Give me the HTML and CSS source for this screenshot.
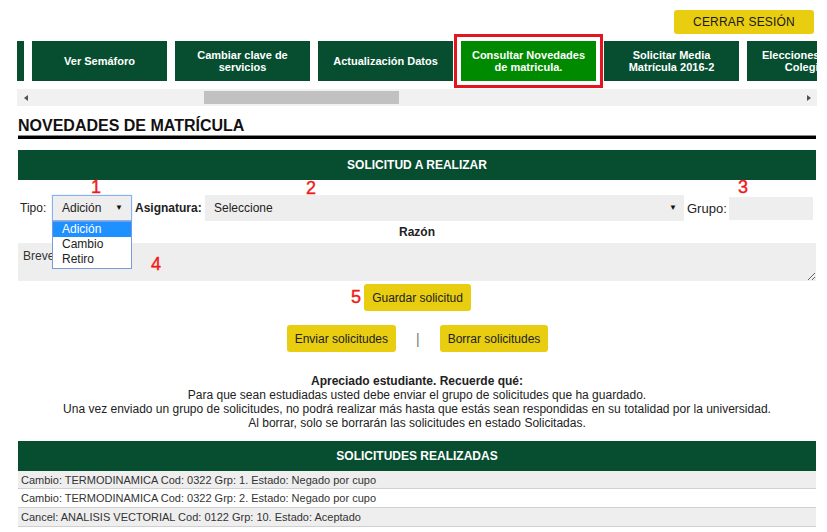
FILE: index.html
```html
<!DOCTYPE html>
<html lang="es">
<head>
  <meta charset="UTF-8">
  <meta name="viewport" content="width=device-width, initial-scale=1.0">
  <title>Novedades de matrícula</title>
  <link rel="stylesheet" href="styles.css">
</head>
<body>
<div class="page">

  <!-- Top bar -->
  <div class="topbar">
    <button class="logout">CERRAR SESIÓN</button>
  </div>

  <!-- Menu tabs (scrolled strip) -->
  <div class="tabs">
    <div class="tabs-row">
      <div class="tab"></div>
      <div class="tab">Ver Semáforo</div>
      <div class="tab">Cambiar clave de<br>servicios</div>
      <div class="tab">Actualización Datos</div>
      <div class="tab active">Consultar Novedades<br>de matricula.</div>
      <div class="tab">Solicitar Media<br>Matrícula 2016-2</div>
      <div class="tab">Elecciones Cuerpos<br>Colegiados</div>
    </div>
  </div>
  <div class="scrollbar">
    <div class="arrow"><span class="tri-left"></span></div>
    <div class="track"><div class="thumb"></div></div>
    <div class="arrow"><span class="tri-right"></span></div>
  </div>

  <h1 class="title">NOVEDADES DE MATRÍCULA</h1>

  <div class="bar">SOLICITUD A REALIZAR</div>

  <!-- Request form -->
  <div class="form-row">
    <span class="label label-tipo">Tipo:</span>
    <div class="select select-tipo">Adición<span class="caret">▼</span></div>
    <span class="label label-asig">Asignatura:</span>
    <div class="select select-asig">Seleccione<span class="caret">▼</span></div>
    <span class="label label-grupo">Grupo:</span>
    <div class="input-grupo"></div>
  </div>

  <div class="reason-label">Razón</div>
  <textarea class="reason" placeholder="Breve explicación"></textarea>

  <div class="actions">
    <button class="btn">Guardar solicitud</button>
  </div>

  <div class="actions actions-send">
    <button class="btn">Enviar solicitudes</button>
    <span class="sep">|</span>
    <button class="btn">Borrar solicitudes</button>
  </div>

  <div class="notice">
    <strong>Apreciado estudiante. Recuerde qué:</strong><br>
    Para que sean estudiadas usted debe enviar el grupo de solicitudes que ha guardado.<br>
    Una vez enviado un grupo de solicitudes, no podrá realizar más hasta que estás sean respondidas en su totalidad por la universidad.<br>
    Al borrar, solo se borrarán las solicitudes en estado Solicitadas.
  </div>

  <div class="bar bar-list">SOLICITUDES REALIZADAS</div>
  <div class="list">
    <div class="row">Cambio: TERMODINAMICA Cod: 0322 Grp: 1. Estado: Negado por cupo</div>
    <div class="row">Cambio: TERMODINAMICA Cod: 0322 Grp: 2. Estado: Negado por cupo</div>
    <div class="row">Cancel: ANALISIS VECTORIAL Cod: 0122 Grp: 10. Estado: Aceptado</div>
  </div>

  <!-- Open dropdown of the Tipo select -->
  <div class="dropdown">
    <div class="option selected">Adición</div>
    <div class="option">Cambio</div>
    <div class="option">Retiro</div>
  </div>

  <!-- Annotation numbers -->
  <span class="mark mark-1">1</span>
  <span class="mark mark-2">2</span>
  <span class="mark mark-3">3</span>
  <span class="mark mark-4">4</span>
  <span class="mark mark-5">5</span>
</div>
</body>
</html>
```

FILE: styles.css
```css
body {
  margin: 0;
  background: #fff;
  color: #222;
  font-family: "Liberation Sans", Arial, sans-serif;
  font-size: 12px;
}
.page {
  position: relative;
  width: 800px;
  margin-left: 17px;
}
/* Top bar */
.topbar {
  display: flex;
  justify-content: flex-end;
  padding: 10px 3px 0 0;
}
.logout {
  width: 140px;
  height: 24px;
  border: none;
  border-radius: 3px;
  background: #e8cd10;
  color: #1a1a1a;
  font-family: inherit;
  font-size: 12px;
  letter-spacing: 0.2px;
  padding: 0;
}
/* Tabs strip */
.tabs {
  overflow: hidden;
  padding: 7px 0;
}
.tabs-row {
  display: flex;
  gap: 8px;
  margin-left: -128px;
}
.tab {
  flex: none;
  width: 135px;
  height: 40px;
  display: flex;
  align-items: center;
  justify-content: center;
  text-align: center;
  background: #074e30;
  color: #fff;
  font-weight: bold;
  font-size: 11px;
  line-height: 12px;
}
.tab.active {
  background: #008a00;
  outline: 3px solid #e3161f;
  outline-offset: 4px;
}
/* Fake scrollbar */
.scrollbar {
  display: flex;
  height: 17px;
  margin-top: 1px;
  background: #f1f1f1;
}
.arrow {
  width: 17px;
  display: flex;
  align-items: center;
  justify-content: center;
}
.tri-left, .tri-right {
  width: 0;
  height: 0;
  border-top: 3.5px solid transparent;
  border-bottom: 3.5px solid transparent;
}
.tri-left { border-right: 4px solid #505050; }
.tri-right { border-left: 4px solid #505050; }
.track {
  flex: 1;
}
.thumb {
  width: 195px;
  height: 13px;
  margin: 2px 0 0 170px;
  background: #c1c1c1;
}
/* Heading */
.title {
  margin: 11px 0 0 1px;
  width: 798px;
  font-size: 16px;
  line-height: 18px;
  color: #111;
  padding-bottom: 1px;
  border-bottom: 3px solid #000;
  box-shadow: inset 0 -1px 0 #8a8a8a;
}
/* Green section bars */
.bar {
  margin: 11px 0 0 1px;
  width: 798px;
  height: 30px;
  line-height: 30px;
  background: #074e30;
  color: #fff;
  font-weight: bold;
  font-size: 12px;
  text-align: center;
}
/* Form */
.form-row {
  display: flex;
  align-items: center;
  height: 26px;
  margin-top: 15px;
  padding-left: 3px;
}
.label {
  flex: none;
}
.label-tipo {
  width: 32px;
}
.label-asig {
  width: 70px;
  margin-left: 3px;
  font-weight: bold;
}
.label-grupo {
  width: 42px;
  margin-left: 3px;
  font-size: 13px;
}
.select {
  flex: none;
  position: relative;
  height: 26px;
  line-height: 26px;
  box-sizing: border-box;
  background: #eee;
  font-size: 12px;
}
.select-tipo {
  width: 80px;
  padding-left: 9px;
  border: 1px solid #86b2f0;
  box-shadow: 0 0 1px #9cc1f5;
  line-height: 24px;
}
.select-asig {
  width: 479px;
  padding-left: 9px;
}
.caret {
  position: absolute;
  right: 8px;
  top: 0;
  font-size: 8px;
  color: #111;
}
.select-asig .caret {
  right: 7px;
}
.input-grupo {
  flex: none;
  width: 84px;
  height: 23px;
  background: #eee;
}
.reason-label {
  margin-top: 4px;
  text-align: center;
  font-weight: bold;
  line-height: 14px;
}
.reason {
  display: block;
  margin: 4px 0 0 1px;
  width: 798px;
  height: 38px;
  box-sizing: border-box;
  border: none;
  background: #eee;
  padding: 6px 5px;
  font-family: inherit;
  font-size: 12px;
  color: #222;
}
.reason::placeholder {
  color: #333;
}
/* Buttons */
.actions {
  display: flex;
  justify-content: center;
  align-items: center;
  margin-top: 3px;
  padding-left: 1px;
}
.actions-send {
  margin-top: 14px;
  gap: 20px;
}
.btn {
  height: 27px;
  padding: 0 8px;
  border: none;
  border-radius: 3px;
  background: #e8cd10;
  color: #222;
  font-family: inherit;
  font-size: 12px;
}
.sep {
  color: #777;
  font-size: 14px;
}
/* Notice text */
.notice {
  margin-top: 22px;
  text-align: center;
  line-height: 14px;
  color: #222;
}
.bar-list {
  margin-top: 11px;
}
.list {
  margin-left: 1px;
  width: 798px;
}
.row {
  height: 18px;
  line-height: 18px;
  padding-left: 3px;
  font-size: 11px;
  color: #333;
  background: #eee;
  border-bottom: 1px solid #d0d0d0;
}
.row:first-child {
  height: 17px;
}
.row:nth-child(2) {
  background: #fff;
}
/* Open dropdown */
.dropdown {
  position: absolute;
  left: 35px;
  top: 221px;
  width: 80px;
  box-sizing: border-box;
  border: 1px solid #7a9bd6;
  background: #fff;
  padding-bottom: 1px;
}
.option {
  height: 15px;
  line-height: 15px;
  padding-left: 9px;
  font-size: 12px;
  color: #222;
}
.option.selected {
  background: #1e90ff;
  color: #fff;
}
/* Annotations */
.mark {
  position: absolute;
  font-size: 18px;
  line-height: 18px;
  color: #f01a1a;
  -webkit-text-stroke: 0.4px #f01a1a;
}
.mark-1 { left: 74px; top: 178px; }
.mark-2 { left: 289px; top: 179px; }
.mark-3 { left: 721px; top: 178px; }
.mark-4 { left: 134px; top: 255px; }
.mark-5 { left: 334px; top: 288px; }
```
